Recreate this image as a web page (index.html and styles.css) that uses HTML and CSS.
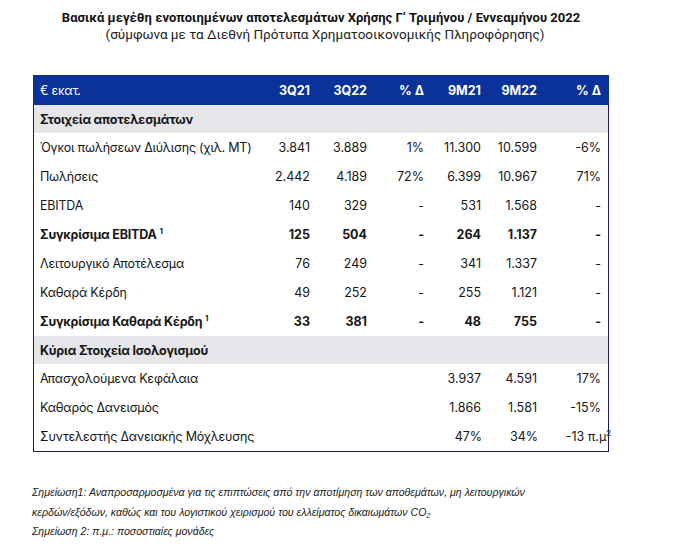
FILE: index.html
```html
<!DOCTYPE html>
<html lang="el">
<head>
<meta charset="utf-8">
<link rel="stylesheet" href="styles.css">
</head>
<body>
<div class="page">
  <header class="heading">
    <div class="title">Βασικά μεγέθη ενοποιημένων αποτελεσμάτων Χρήσης Γ’ Τριμήνου / Εννεαμήνου 2022</div>
    <div class="subtitle">(σύμφωνα με τα Διεθνή Πρότυπα Χρηματοοικονομικής Πληροφόρησης)</div>
  </header>

  <div class="table">
    <div class="row head">
      <div class="label">€ εκατ.</div><div>3Q21</div><div>3Q22</div><div>% Δ</div><div>9M21</div><div>9M22</div><div>% Δ</div>
    </div>
    <div class="row section"><div class="label">Στοιχεία αποτελεσμάτων</div></div>
    <div class="row">
      <div class="label">Όγκοι πωλήσεων Διύλισης (χιλ. ΜΤ)</div><div>3.841</div><div>3.889</div><div>1%</div><div>11.300</div><div>10.599</div><div>-6%</div>
    </div>
    <div class="row">
      <div class="label">Πωλήσεις</div><div>2.442</div><div>4.189</div><div>72%</div><div>6.399</div><div>10.967</div><div>71%</div>
    </div>
    <div class="row">
      <div class="label">EBITDA</div><div>140</div><div>329</div><div>-</div><div>531</div><div>1.568</div><div>-</div>
    </div>
    <div class="row bold">
      <div class="label">Συγκρίσιμα EBITDA <sup>1</sup></div><div>125</div><div>504</div><div>-</div><div>264</div><div>1.137</div><div>-</div>
    </div>
    <div class="row">
      <div class="label">Λειτουργικό Αποτέλεσμα</div><div>76</div><div>249</div><div>-</div><div>341</div><div>1.337</div><div>-</div>
    </div>
    <div class="row">
      <div class="label">Καθαρά Κέρδη</div><div>49</div><div>252</div><div>-</div><div>255</div><div>1.121</div><div>-</div>
    </div>
    <div class="row bold">
      <div class="label">Συγκρίσιμα Καθαρά Κέρδη <sup>1</sup></div><div>33</div><div>381</div><div>-</div><div>48</div><div>755</div><div>-</div>
    </div>
    <div class="row section"><div class="label">Κύρια Στοιχεία Ισολογισμού</div></div>
    <div class="row">
      <div class="label">Απασχολούμενα Κεφάλαια</div><div></div><div></div><div></div><div>3.937</div><div>4.591</div><div>17%</div>
    </div>
    <div class="row">
      <div class="label">Καθαρός Δανεισμός</div><div></div><div></div><div></div><div>1.866</div><div>1.581</div><div>-15%</div>
    </div>
    <div class="row">
      <div class="label">Συντελεστής Δανειακής Μόχλευσης</div><div></div><div></div><div></div><div>47%</div><div>34%</div><div class="over">-13 π.μ<sup>2</sup></div>
    </div>
  </div>

  <div class="notes">
    <p>Σημείωση1: Αναπροσαρμοσμένα για τις επιπτώσεις από την αποτίμηση των αποθεμάτων, μη λειτουργικών<br>κερδών/εξόδων, καθώς και του λογιστικού χειρισμού του ελλείματος δικαιωμάτων CO<sub>2</sub></p>
    <p>Σημείωση 2: π.μ.: ποσοστιαίες μονάδες</p>
  </div>
</div>
</body>
</html>
```
FILE: styles.css
```css
html, body {
  margin: 0;
  padding: 0;
  background: #ffffff;
}

.page {
  width: 576px;
  margin-left: 33px;
  padding-top: 9px;
}

.heading {
  text-align: center;
  color: #111111;
  font-family: "Roboto", "Liberation Sans", sans-serif;
}

.title {
  font-weight: 700;
  font-size: 13px;
  line-height: 17px;
  letter-spacing: 0.02px;
}

.subtitle {
  font-size: 13.5px;
  line-height: 16px;
  color: #222222;
  padding-left: 8px;
}

.table {
  margin-top: 33px;
  border: 1px solid #1b1a5c;
  border-top: none;
  font-family: "Inter", "Noto Sans", sans-serif;
  font-size: 12.5px;
  color: #161616;
}

.row {
  display: grid;
  grid-template-columns: 1fr 57px 57px 57px 57px 56px 64px;
  height: 29px;
  align-items: center;
  padding: 0 7px 0 6px;
}

.row > div {
  text-align: right;
  white-space: nowrap;
}

.row > .label {
  text-align: left;
  letter-spacing: -0.2px;
}

.head {
  height: 30px;
  background: #0b329b;
  color: #ffffff;
  font-weight: 700;
  margin: 0 -1px;
  padding: 0 8px 0 7px;
}

.head > .label {
  font-weight: 400;
}

.section {
  background: #e5e5ea;
  font-weight: 700;
  height: 28px;
}

.bold {
  font-weight: 700;
}

sup {
  font-size: 8px;
  vertical-align: 5px;
  line-height: 0;
}

.over {
  margin-right: -9px;
}

.notes {
  margin-top: 31px;
  margin-left: -1px;
  font-family: "Liberation Sans", Arial, sans-serif;
  font-style: italic;
  font-size: 10.6px;
  color: #222222;
}

.notes p {
  margin: 0 0 0 0;
  line-height: 19.5px;
}

.notes p + p {
  margin-top: 0;
}

sub {
  font-size: 7px;
  vertical-align: -2px;
  line-height: 0;
}
```
